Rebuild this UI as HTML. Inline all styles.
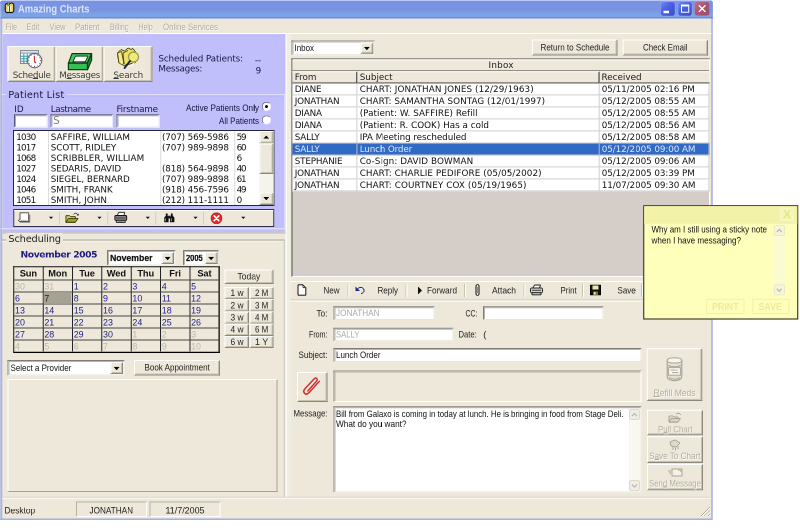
<!DOCTYPE html>
<html><head><meta charset="utf-8"><title>Amazing Charts</title>
<style>
*{box-sizing:border-box;margin:0;padding:0}
html,body{width:800px;height:528px;overflow:hidden;background:#fff}
body{position:relative;font-family:"Liberation Sans",sans-serif;color:#000}

#w{position:absolute;left:0;top:0;width:3200px;height:2112px;transform:scale(0.25);transform-origin:0 0;font-size:36px}
.a{position:absolute;white-space:nowrap}
.v{font-family:"DejaVu Sans","Liberation Sans",sans-serif}
.btn{position:absolute;background:#eee8db;border:4px solid;border-color:#fff #8a887c #8a887c #fff;box-shadow:inset -4px -4px 0 #c5c2b0;text-align:center;white-space:nowrap}
.sunk{position:absolute;border:4px solid;border-color:#8a887c #fff #fff #8a887c;box-shadow:inset 4px 4px 0 #b5b2a0}
.inp{position:absolute;background:#fff;border:4px solid;border-color:#807e74 #e8e6da #e8e6da #807e74;box-shadow:inset 4px 4px 0 #b8b5a5;white-space:nowrap;overflow:hidden}
.inl{border-color:#5a5a74 #e8e8ff #e8e8ff #5a5a74;box-shadow:inset 4px 4px 0 #a8a8c8}
.grp{position:absolute;border:4px solid #aaa799;box-shadow:4px 4px 0 #fbfaf4, inset 0 4px 0 #fbfaf4}

#t{position:absolute;left:0;top:0;width:1600px;height:1056px;transform:scale(0.5);transform-origin:0 0;font-size:18px;will-change:transform}
.dis{text-shadow:1.6px 1.6px 0 #fbfaf5}
u{text-decoration:underline;text-decoration-skip-ink:none;text-underline-offset:-0.4px;text-decoration-thickness:1.6px}
#t .a{position:absolute;white-space:nowrap}
</style></head><body>
<div id="w">
<div class="a" style="left:0;top:0;width:2850.8px;height:2080px;background:#a4aee2;border-radius:16px 12px 0 0"></div>
<div class="a" style="left:0;top:0;width:2850.8px;height:74.8px;background:linear-gradient(#c4d1f9 0,#b4c4f6 3.2px,#7a92e2 5.6px,#7994e3 24px,#7893e0 40px,#7aa0e5 52px,#7ba6e6 65.6px,#6f8cd4 70px,#6b86cc 74.8px);border-radius:16px 12px 0 0"></div>
<div class="a" style="left:0;top:16px;width:4.8px;height:2060px;background:rgba(255,255,255,.28)"></div>
<svg class="a" style="left:15.2px;top:7.2px" width="46" height="48" viewBox="0 0 23 24"><path d="M3 7C3 3 9 2 11 5C13 1 20 2 20 6V18C20 21 15 23 11 21C7 23 3 21 3 18Z" fill="#e6d44c" stroke="#15150a" stroke-width="2.2"/><path d="M8 8H15V19H8Z" fill="#fbf8dc"/><path d="M11.5 8V20" stroke="#15150a" stroke-width="1.6"/><circle cx="9" cy="4.6" r="2.4" fill="#f2e674" stroke="#15150a" stroke-width="1.4"/></svg>
<div class="a" style="left:2642.8px;top:8px;width:56px;height:55.2px;border-radius:10px;background:linear-gradient(135deg,#7088f2,#4a60e2 45%,#3a4cc8);box-shadow:0 0 0 3.2px rgba(160,180,250,.55)"><div class="a" style="left:11.2px;top:34.8px;width:22px;height:10px;background:#fff"></div></div>
<div class="a" style="left:2712.8px;top:8px;width:54.4px;height:55.2px;border-radius:10px;background:linear-gradient(135deg,#7088f2,#4a60e2 45%,#3a4cc8);box-shadow:0 0 0 3.2px rgba(160,180,250,.55)"><div class="a" style="left:11.2px;top:10px;width:32.8px;height:32.8px;border:4px solid #fff;border-top-width:8px"></div></div>
<div class="a" style="left:2779.2px;top:8px;width:57.6px;height:54.4px;border-radius:10px;background:linear-gradient(135deg,#c07088,#a8546f 50%,#9c4a68);box-shadow:0 0 0 3.2px rgba(170,150,220,.4)"><svg class="a" style="left:13.6px;top:10.8px" width="31.2" height="31.2" viewBox="0 0 8 8"><path d="M0.5 0.5L7.5 7.5M7.5 0.5L0.5 7.5" stroke="#fff" stroke-width="1.35"/></svg></div>
<div class="a" style="left:8.8px;top:74.8px;width:2836px;height:1998.8px;background:#eee8db"></div>
<div class="a" style="left:8.8px;top:74.8px;width:2836px;height:5.2px;background:#e6e5f6"></div>
<div class="a" style="left:10px;top:132px;width:2836px;height:4px;background:#fff"></div>
<div class="a" style="left:10px;top:136px;width:1133.2px;height:794.4px;background:#c1befc"></div>
<div class="a" style="left:10px;top:930px;width:1134px;height:4px;background:#bdbab0"></div>
<div class="a" style="left:1142px;top:136px;width:6.4px;height:1852px;background:#fbfaf4"></div>
<div class="a" style="left:1148.4px;top:136px;width:16px;height:1852px;background:#f0eee2"></div>
<div class="btn" style="left:30px;top:184px;width:192px;height:144px"></div>
<svg class="a" style="left:76px;top:192px" width="104" height="88" viewBox="0 0 26 22">
<rect x="1.5" y="2.5" width="18" height="13" fill="#fff" stroke="#7a8a98" stroke-width="1"/>
<rect x="1.5" y="2.5" width="18" height="2.6" fill="#dde3ea" stroke="#7a8a98" stroke-width=".8"/>
<path d="M4.8 5.5V15M8.2 5.5V15M11.6 5.5V15M2 8.2H14M2 10.8H14M2 13.2H14" stroke="#3aa0a8" stroke-width="1.1"/>
<circle cx="15.6" cy="12.6" r="7.2" fill="#fff" stroke="#6a7088" stroke-width="1.2"/>
<g fill="#444"><circle cx="15.6" cy="6.8" r=".55"/><circle cx="15.6" cy="18.4" r=".55"/><circle cx="9.8" cy="12.6" r=".55"/><circle cx="21.4" cy="12.6" r=".55"/><circle cx="12.7" cy="7.6" r=".45"/><circle cx="18.5" cy="7.6" r=".45"/><circle cx="10.6" cy="9.7" r=".45"/><circle cx="20.6" cy="9.7" r=".45"/><circle cx="10.6" cy="15.5" r=".45"/><circle cx="20.6" cy="15.5" r=".45"/><circle cx="12.7" cy="17.6" r=".45"/><circle cx="18.5" cy="17.6" r=".45"/></g>
<path d="M15.4 8V13.4L17 15" stroke="#d42828" stroke-width="1.1" fill="none"/>
</svg>
<div class="btn" style="left:222px;top:184px;width:192px;height:144px"></div>
<svg class="a" style="left:268px;top:210px" width="108" height="76" viewBox="0 0 27 19">
<path d="M5 1.2H24.6L20.5 10.6H1.4Z" fill="#3cc85a" stroke="#0c3c14" stroke-width="1.2" stroke-linejoin="round"/>
<path d="M1.4 10.6H20.5V17.2H1.4Z" fill="#34c052" stroke="#0c3c14" stroke-width="1.2" stroke-linejoin="round"/>
<path d="M20.5 10.6L24.6 1.2V7.5L20.5 17.2Z" fill="#22953a" stroke="#0c3c14" stroke-width="1.2" stroke-linejoin="round"/>
<path d="M8.5 3.6H21L18.2 9.6H5.8Z" fill="#fff" stroke="#0c3c14" stroke-width="1"/>
<path d="M6.5 9.4C8 11.8 15 11.8 17.8 9.4Z" fill="#666" stroke="#0c3c14" stroke-width=".8"/>
</svg>
<div class="btn" style="left:414px;top:184px;width:196px;height:144px"></div>
<svg class="a" style="left:464px;top:184px" width="104" height="100" viewBox="0 0 26 25">
<path d="M1.5 7L5 3.5L8.5 5L12 2L15 3.5L17 2.5L19.5 6V16.5L8 19.5L3 17Z" fill="#ece068" stroke="#4a4410" stroke-width="1"/>
<path d="M3 17L1.5 7L5.5 5.5L8 18" fill="#f4ec90" stroke="#4a4410" stroke-width=".9"/>
<path d="M8 18L7 7L12 4.5" fill="none" stroke="#4a4410" stroke-width=".9"/>
<path d="M13.5 15L9 21.5" stroke="#fff" stroke-width="1.2" stroke-linecap="round" transform="translate(6.5,-1.5)"/>
<circle cx="17.5" cy="11" r="5" fill="#ecec78" stroke="#9a9a50" stroke-width="1.3"/>
<path d="M14 15L8.6 22" stroke="#15204a" stroke-width="2" stroke-linecap="round"/>
</svg>
<div class="a" style="left:4.8px;top:377.2px;width:1137.2px;height:540px;border:4px solid #e9e9ff;border-left:none;box-shadow:inset 0 4px 0 #b0b0e0"></div>
<div class="inp inl" style="left:56px;top:456.8px;width:133.6px;height:53.2px"></div>
<div class="inp inl" style="left:202px;top:456.8px;width:250px;height:53.2px"></div>
<div class="inp inl" style="left:466px;top:456.8px;width:172px;height:53.2px"></div>
<div class="a" style="left:1046.8px;top:406.8px;width:38px;height:38px;border-radius:50%;background:#fff;border:4px solid;border-color:#77768a #e8e8f8 #e8e8f8 #77768a"></div>
<div class="a" style="left:1059.6px;top:419.6px;width:12.8px;height:12.8px;border-radius:50%;background:#000"></div>
<div class="a" style="left:1046.8px;top:460.8px;width:38px;height:38px;border-radius:50%;background:#fff;border:4px solid;border-color:#77768a #e8e8f8 #e8e8f8 #77768a"></div>
<div class="a" style="left:52px;top:520px;width:1046px;height:304px;background:#fff;border:4px solid #26263c"></div>
<div class="a" style="left:192px;top:524px;width:4px;height:296px;background:#dcdcdc"></div>
<div class="a" style="left:640.8px;top:524px;width:4px;height:296px;background:#dcdcdc"></div>
<div class="a" style="left:936.8px;top:524px;width:4px;height:296px;background:#dcdcdc"></div>
<div class="a" style="left:1038px;top:524px;width:56px;height:296px;background:#f4f3ec"></div>
<div class="btn" style="left:1038px;top:524px;width:56px;height:50px"></div>
<svg class="a" style="left:1053.2px;top:541.8px" width="24" height="12.8" viewBox="0 0 6 3.2"><path d="M0 3.2H6L3 0Z" fill="#000"/></svg>
<div class="btn" style="left:1038px;top:770px;width:56px;height:50px"></div>
<svg class="a" style="left:1053.2px;top:787.8px" width="24" height="12.8" viewBox="0 0 6 3.2"><path d="M0 0H6L3 3.2Z" fill="#000"/></svg>
<div class="btn" style="left:1038px;top:574px;width:56px;height:122px"></div>
<div class="a" style="left:52.8px;top:836px;width:1044px;height:72px;background:#eee8db;border:4px solid #30304c"></div>
<div class="a" style="left:56.8px;top:840px;width:1036px;height:4px;background:#fff"></div>
<div class="a" style="left:236px;top:846px;width:4px;height:52px;background:#d2cfbf"></div>
<div class="a" style="left:429.2px;top:846px;width:4px;height:52px;background:#d2cfbf"></div>
<div class="a" style="left:621.2px;top:846px;width:4px;height:52px;background:#d2cfbf"></div>
<div class="a" style="left:812px;top:846px;width:4px;height:52px;background:#d2cfbf"></div>
<svg class="a" style="left:195.2px;top:865.6px" width="18.4" height="11.2" viewBox="0 0 4.6 2.8"><path d="M0 0H4.6L2.3 2.6Z" fill="#111"/></svg>
<svg class="a" style="left:388.8px;top:865.6px" width="18.4" height="11.2" viewBox="0 0 4.6 2.8"><path d="M0 0H4.6L2.3 2.6Z" fill="#111"/></svg>
<svg class="a" style="left:581.6px;top:865.6px" width="18.4" height="11.2" viewBox="0 0 4.6 2.8"><path d="M0 0H4.6L2.3 2.6Z" fill="#111"/></svg>
<svg class="a" style="left:772.8px;top:865.6px" width="18.4" height="11.2" viewBox="0 0 4.6 2.8"><path d="M0 0H4.6L2.3 2.6Z" fill="#111"/></svg>
<svg class="a" style="left:964px;top:865.6px" width="18.4" height="11.2" viewBox="0 0 4.6 2.8"><path d="M0 0H4.6L2.3 2.6Z" fill="#111"/></svg>
<svg class="a" style="left:68px;top:846px" width="56" height="48" viewBox="0 0 14 12"><path d="M2.8 10.6H12.6V3.2" fill="none" stroke="#8a8a8a" stroke-width="1.3"/><path d="M3 1.3H11.6V8.6L12 10H2.2L1.4 8.6L3 8.2Z" fill="#fff" stroke="#444" stroke-width=".9"/><path d="M3.6 8.4L4.4 9.4L5.4 8.4L6.4 9.4L7.4 8.4L8.4 9.4L9.4 8.4L10.4 9.4" fill="none" stroke="#777" stroke-width=".6"/></svg>
<svg class="a" style="left:260px;top:846px" width="60" height="52" viewBox="0 0 16 13"><path d="M1 4H5L6 5H11V11H1Z" fill="#d8d060" stroke="#3c3c0c" stroke-width="1"/><path d="M1 11L3.5 7H14L11 11Z" fill="#a0a030" stroke="#3c3c0c" stroke-width="1"/><path d="M9 2.5C10.5 1 12.5 1 13.5 3" stroke="#222" fill="none" stroke-width=".9"/><path d="M12.3 3.8H14.6V1.6Z" fill="#222"/></svg>
<svg class="a" style="left:454px;top:844px" width="60" height="52" viewBox="0 0 16 13"><path d="M4 4.5L5.5 1H12L11 4.5" fill="#fff" stroke="#222" stroke-width="1"/><rect x="1.5" y="4.5" width="12.5" height="5" rx="1" fill="#a8a8a8" stroke="#111" stroke-width="1.1"/><path d="M3 9.5H12.5V11.7H3Z" fill="#e4e4e4" stroke="#111" stroke-width="1"/><path d="M2.5 7H13" stroke="#222" stroke-width="1.2"/><path d="M4.5 10.6H11" stroke="#666" stroke-width=".7"/></svg>
<svg class="a" style="left:652.8px;top:848px" width="50" height="48" viewBox="0 0 13 13"><path d="M2.5 1.5H4.5V4L5.5 6V11H0.8V6L2.5 4Z" fill="#111"/><path d="M8 1.5H10V4L11.8 6V11H7V6L8 4Z" fill="#111"/><rect x="5" y="4" width="2.5" height="3" fill="#111"/><path d="M2 7V10M8.5 7V10" stroke="#8ad" stroke-width="1"/></svg>
<svg class="a" style="left:842.4px;top:848.8px" width="48" height="48" viewBox="0 0 13 13"><circle cx="6.5" cy="6.5" r="6" fill="#e02828"/><circle cx="6.5" cy="6.5" r="6" fill="none" stroke="#a01010" stroke-width=".8"/><path d="M4 4L9 9M9 4L4 9" stroke="#fff" stroke-width="1.8" stroke-linecap="round"/></svg>
<div class="grp" style="left:4.8px;top:958px;width:1134px;height:1032px;border-left:none;border-bottom:none;border-right-color:#c9c6b6;box-shadow:inset 0 4px 0 #fbfaf4"></div>
<div class="inp" style="left:428px;top:1000px;width:274px;height:62px"></div>
<div class="btn" style="left:646px;top:1008px;width:50px;height:48px"></div>
<svg class="a" style="left:658px;top:1027px" width="26" height="16" viewBox="0 0 6.5 4"><path d="M0 0H6.2L3.1 3.4Z" fill="#000"/></svg>
<div class="inp" style="left:732px;top:1000px;width:144px;height:62px"></div>
<div class="btn" style="left:820px;top:1008px;width:50px;height:48px"></div>
<svg class="a" style="left:832px;top:1027px" width="26" height="16" viewBox="0 0 6.5 4"><path d="M0 0H6.2L3.1 3.4Z" fill="#000"/></svg>
<div class="a" style="left:53.2px;top:1065.2px;width:825.8px;height:346.8px;background:#eee8db;border:4px solid #111;border-bottom:5.6px solid #000;border-right:5.2px solid #000"></div>
<div class="a" style="left:170.6px;top:1065.2px;width:4px;height:340.8px;background:#222"></div>
<div class="a" style="left:288px;top:1065.2px;width:4px;height:340.8px;background:#222"></div>
<div class="a" style="left:405.4px;top:1065.2px;width:4px;height:340.8px;background:#222"></div>
<div class="a" style="left:522.8px;top:1065.2px;width:4px;height:340.8px;background:#222"></div>
<div class="a" style="left:640.2px;top:1065.2px;width:4px;height:340.8px;background:#222"></div>
<div class="a" style="left:757.6px;top:1065.2px;width:4px;height:340.8px;background:#222"></div>
<div class="a" style="left:53.2px;top:1118px;width:821.8px;height:4px;background:#444"></div>
<div class="a" style="left:53.2px;top:1166px;width:821.8px;height:4px;background:#444"></div>
<div class="a" style="left:53.2px;top:1214px;width:821.8px;height:4px;background:#444"></div>
<div class="a" style="left:53.2px;top:1262px;width:821.8px;height:4px;background:#444"></div>
<div class="a" style="left:53.2px;top:1310px;width:821.8px;height:4px;background:#444"></div>
<div class="a" style="left:53.2px;top:1358px;width:821.8px;height:4px;background:#444"></div>
<div class="a" style="left:174.6px;top:1170px;width:111.4px;height:44px;background:#a5a193"></div>
<div class="btn" style="left:898px;top:1078px;width:196px;height:58px"></div>
<div class="btn" style="left:898px;top:1148.4px;width:98px;height:48.8px"></div>
<div class="btn" style="left:998px;top:1148.4px;width:96px;height:48.8px"></div>
<div class="btn" style="left:898px;top:1197.2px;width:98px;height:48.8px"></div>
<div class="btn" style="left:998px;top:1197.2px;width:96px;height:48.8px"></div>
<div class="btn" style="left:898px;top:1246px;width:98px;height:48.8px"></div>
<div class="btn" style="left:998px;top:1246px;width:96px;height:48.8px"></div>
<div class="btn" style="left:898px;top:1294.8px;width:98px;height:48.8px"></div>
<div class="btn" style="left:998px;top:1294.8px;width:96px;height:48.8px"></div>
<div class="btn" style="left:898px;top:1343.6px;width:98px;height:48.8px"></div>
<div class="btn" style="left:998px;top:1343.6px;width:96px;height:48.8px"></div>
<div class="inp" style="left:30px;top:1440px;width:468px;height:62px"></div>
<div class="btn" style="left:442px;top:1448px;width:50px;height:48px"></div>
<svg class="a" style="left:454px;top:1467px" width="26" height="16" viewBox="0 0 6.5 4"><path d="M0 0H6.2L3.1 3.4Z" fill="#000"/></svg>
<div class="btn" style="left:536px;top:1440px;width:344px;height:62px"></div>
<div class="a" style="left:30px;top:1516px;width:1080px;height:452px;border:4px solid;border-color:#fff #a5a294 #a5a294 #fff"></div>
<div class="a" style="left:8.8px;top:1987.2px;width:2836px;height:4px;background:#d4d1c2"></div>
<div class="a" style="left:8.8px;top:1991.2px;width:2836px;height:4px;background:#fbfaf6"></div>
<div class="a" style="left:304px;top:2006px;width:284px;height:62px;border:4px solid;border-color:#b5b2a0 #fff #fff #b5b2a0"></div>
<div class="a" style="left:598px;top:2006px;width:284px;height:62px;border:4px solid;border-color:#b5b2a0 #fff #fff #b5b2a0"></div>
<svg class="a" style="left:2800px;top:2024px" width="44" height="44" viewBox="0 0 11 11"><path d="M10 1L1 10M10 4.5L4.5 10M10 8L8 10" stroke="#aca899" stroke-width="1"/><path d="M10 2L2 10M10 5.5L5.5 10M10 9L9 10" stroke="#fff" stroke-width="1"/></svg>
<div class="inp" style="left:1166px;top:161.6px;width:332.8px;height:59.2px"></div>
<div class="btn" style="left:1442.8px;top:169.6px;width:50px;height:45.2px"></div>
<svg class="a" style="left:1454.8px;top:187.2px" width="26" height="16" viewBox="0 0 6.5 4"><path d="M0 0H6.2L3.1 3.4Z" fill="#000"/></svg>
<div class="btn" style="left:2128px;top:158px;width:342px;height:64px"></div>
<div class="btn" style="left:2490.8px;top:158.4px;width:340.8px;height:64px"></div>
<div class="a" style="left:1166px;top:234px;width:1674px;height:874px;background:#d5cec8;border:4px solid #55534a;border-right-color:#fff;border-bottom-color:#fff"></div>
<div class="a" style="left:1170px;top:238px;width:1666px;height:48px;background:#eee8db;border-bottom:4px solid #333;border-top:4px solid #fff"></div>
<div class="a" style="left:1170px;top:284.8px;width:260px;height:50px;background:#eee8db;border-right:5.2px solid #333;border-bottom:5.2px solid #333;border-top:4px solid #fff"></div>
<div class="a" style="left:1430px;top:284.8px;width:969.2px;height:50px;background:#eee8db;border-right:5.2px solid #333;border-bottom:5.2px solid #333;border-top:4px solid #fff"></div>
<div class="a" style="left:2399.2px;top:284.8px;width:438.8px;height:50px;background:#eee8db;border-right:0px solid #333;border-bottom:5.2px solid #333;border-top:4px solid #fff"></div>
<div class="a" style="left:1170px;top:334px;width:260px;height:48px;background:#fff;border-right:4px solid #c8c8c8;border-bottom:4px solid #c8c8c8"></div>
<div class="a" style="left:1430px;top:334px;width:969.2px;height:48px;background:#fff;border-right:4px solid #c8c8c8;border-bottom:4px solid #c8c8c8"></div>
<div class="a" style="left:2399.2px;top:334px;width:438.8px;height:48px;background:#fff;border-right:4px solid #c8c8c8;border-bottom:4px solid #c8c8c8"></div>
<div class="a" style="left:1170px;top:382px;width:260px;height:48px;background:#fff;border-right:4px solid #c8c8c8;border-bottom:4px solid #c8c8c8"></div>
<div class="a" style="left:1430px;top:382px;width:969.2px;height:48px;background:#fff;border-right:4px solid #c8c8c8;border-bottom:4px solid #c8c8c8"></div>
<div class="a" style="left:2399.2px;top:382px;width:438.8px;height:48px;background:#fff;border-right:4px solid #c8c8c8;border-bottom:4px solid #c8c8c8"></div>
<div class="a" style="left:1170px;top:430px;width:260px;height:48px;background:#fff;border-right:4px solid #c8c8c8;border-bottom:4px solid #c8c8c8"></div>
<div class="a" style="left:1430px;top:430px;width:969.2px;height:48px;background:#fff;border-right:4px solid #c8c8c8;border-bottom:4px solid #c8c8c8"></div>
<div class="a" style="left:2399.2px;top:430px;width:438.8px;height:48px;background:#fff;border-right:4px solid #c8c8c8;border-bottom:4px solid #c8c8c8"></div>
<div class="a" style="left:1170px;top:478px;width:260px;height:48px;background:#fff;border-right:4px solid #c8c8c8;border-bottom:4px solid #c8c8c8"></div>
<div class="a" style="left:1430px;top:478px;width:969.2px;height:48px;background:#fff;border-right:4px solid #c8c8c8;border-bottom:4px solid #c8c8c8"></div>
<div class="a" style="left:2399.2px;top:478px;width:438.8px;height:48px;background:#fff;border-right:4px solid #c8c8c8;border-bottom:4px solid #c8c8c8"></div>
<div class="a" style="left:1170px;top:526px;width:260px;height:48px;background:#fff;border-right:4px solid #c8c8c8;border-bottom:4px solid #c8c8c8"></div>
<div class="a" style="left:1430px;top:526px;width:969.2px;height:48px;background:#fff;border-right:4px solid #c8c8c8;border-bottom:4px solid #c8c8c8"></div>
<div class="a" style="left:2399.2px;top:526px;width:438.8px;height:48px;background:#fff;border-right:4px solid #c8c8c8;border-bottom:4px solid #c8c8c8"></div>
<div class="a" style="left:1170px;top:574px;width:260px;height:48px;background:#316ac5;border-right:4px solid #c8c8c8;border-bottom:4px solid #c8c8c8"></div>
<div class="a" style="left:1430px;top:574px;width:969.2px;height:48px;background:#316ac5;border-right:4px solid #c8c8c8;border-bottom:4px solid #c8c8c8"></div>
<div class="a" style="left:2399.2px;top:574px;width:438.8px;height:48px;background:#316ac5;border-right:4px solid #c8c8c8;border-bottom:4px solid #c8c8c8"></div>
<div class="a" style="left:1170px;top:622px;width:260px;height:48px;background:#fff;border-right:4px solid #c8c8c8;border-bottom:4px solid #c8c8c8"></div>
<div class="a" style="left:1430px;top:622px;width:969.2px;height:48px;background:#fff;border-right:4px solid #c8c8c8;border-bottom:4px solid #c8c8c8"></div>
<div class="a" style="left:2399.2px;top:622px;width:438.8px;height:48px;background:#fff;border-right:4px solid #c8c8c8;border-bottom:4px solid #c8c8c8"></div>
<div class="a" style="left:1170px;top:670px;width:260px;height:48px;background:#fff;border-right:4px solid #c8c8c8;border-bottom:4px solid #c8c8c8"></div>
<div class="a" style="left:1430px;top:670px;width:969.2px;height:48px;background:#fff;border-right:4px solid #c8c8c8;border-bottom:4px solid #c8c8c8"></div>
<div class="a" style="left:2399.2px;top:670px;width:438.8px;height:48px;background:#fff;border-right:4px solid #c8c8c8;border-bottom:4px solid #c8c8c8"></div>
<div class="a" style="left:1170px;top:718px;width:260px;height:48px;background:#fff;border-right:4px solid #c8c8c8;border-bottom:4px solid #c8c8c8"></div>
<div class="a" style="left:1430px;top:718px;width:969.2px;height:48px;background:#fff;border-right:4px solid #c8c8c8;border-bottom:4px solid #c8c8c8"></div>
<div class="a" style="left:2399.2px;top:718px;width:438.8px;height:48px;background:#fff;border-right:4px solid #c8c8c8;border-bottom:4px solid #c8c8c8"></div>
<div class="a" style="left:1160px;top:1124px;width:1684px;height:4px;background:#fff"></div>
<div class="a" style="left:1160px;top:1198px;width:1684px;height:4px;background:#c5c2b0"></div>
<div class="a" style="left:1160px;top:1202px;width:1684px;height:4px;background:#fff"></div>
<div class="a" style="left:1390px;top:1136px;width:4px;height:52px;background:#c6c3b3"></div><div class="a" style="left:1394px;top:1136px;width:4px;height:52px;background:#fff"></div>
<div class="a" style="left:1622px;top:1136px;width:4px;height:52px;background:#c6c3b3"></div><div class="a" style="left:1626px;top:1136px;width:4px;height:52px;background:#fff"></div>
<div class="a" style="left:1856px;top:1136px;width:4px;height:52px;background:#c6c3b3"></div><div class="a" style="left:1860px;top:1136px;width:4px;height:52px;background:#fff"></div>
<div class="a" style="left:2094px;top:1136px;width:4px;height:52px;background:#c6c3b3"></div><div class="a" style="left:2098px;top:1136px;width:4px;height:52px;background:#fff"></div>
<div class="a" style="left:2328px;top:1136px;width:4px;height:52px;background:#c6c3b3"></div><div class="a" style="left:2332px;top:1136px;width:4px;height:52px;background:#fff"></div>
<div class="a" style="left:2564px;top:1136px;width:4px;height:52px;background:#c6c3b3"></div><div class="a" style="left:2568px;top:1136px;width:4px;height:52px;background:#fff"></div>
<svg class="a" style="left:1188px;top:1136px" width="40" height="48" viewBox="0 0 10 12"><path d="M1 .8H6L8.8 3.6V11.2H1Z" fill="#fff" stroke="#111" stroke-width="1"/><path d="M6 .8V3.6H8.8" fill="none" stroke="#111" stroke-width=".8"/></svg>
<svg class="a" style="left:1420px;top:1140px" width="44" height="40" viewBox="0 0 11 10"><path d="M2 4.5C4 1.5 8.5 1.8 9 5C9.3 7 8 8.5 6 8.5" fill="none" stroke="#1a226a" stroke-width="1"/><path d="M.5 1.5V6H5Z" fill="#1a2a90"/></svg>
<svg class="a" style="left:1670px;top:1146px" width="20" height="32" viewBox="0 0 5 8"><path d="M.5 0L4.5 4L.5 8Z" fill="#111"/></svg>
<svg class="a" style="left:1900px;top:1134px" width="20" height="52" viewBox="0 0 5 13"><rect x="1" y="1" width="3" height="11" rx="1.5" fill="none" stroke="#111" stroke-width="1"/><path d="M2.5 3.5V9.5" stroke="#777" stroke-width=".8"/></svg>
<svg class="a" style="left:2116px;top:1136px" width="60" height="48" viewBox="0 0 15 12"><path d="M4 4L5.5 1H11.5L10.5 4" fill="#fff" stroke="#222" stroke-width="1"/><rect x="1.5" y="4" width="12" height="4.8" rx="1" fill="#d0d0d0" stroke="#222" stroke-width="1"/><path d="M3 8.8H12V10.8H3Z" fill="#eee" stroke="#222" stroke-width="1"/><path d="M3 6.3H12" stroke="#444" stroke-width="1"/></svg>
<svg class="a" style="left:2360px;top:1138px" width="44" height="44" viewBox="0 0 11 11"><rect x=".5" y=".5" width="10" height="10" fill="#141404" stroke="#000" stroke-width="1"/><rect x="2.5" y="1" width="6" height="4" fill="#e8e8b0"/><rect x="3" y="7" width="5" height="3.5" fill="#7a7a30"/><rect x="4" y="7.6" width="1.6" height="2.4" fill="#e8e8b0"/></svg>
<div class="inp" style="left:1334px;top:1224.8px;width:404px;height:55.2px"></div>
<div class="inp" style="left:1932px;top:1224.8px;width:482px;height:55.2px"></div>
<div class="inp" style="left:1334px;top:1311.2px;width:480px;height:53.6px"></div>
<div class="inp" style="left:1334px;top:1392px;width:1232px;height:56px"></div>
<div class="btn" style="left:1188px;top:1488px;width:122px;height:120px"></div>
<svg class="a" style="left:1204px;top:1496px" width="88" height="94" viewBox="0 0 21 22"><path d="M6.5 16L15 6.5C16.5 4.8 14.5 2.6 12.8 4.2L3.6 14.2C0.8 17.4 4.6 20.6 7.4 17.8L17.5 6.8" fill="none" stroke="#d03030" stroke-width="1.4" stroke-linecap="round"/></svg>
<div class="sunk" style="left:1334px;top:1482px;width:1232px;height:126px;background:#eee8db"></div>
<div class="inp" style="left:1334px;top:1624.8px;width:1232px;height:345.2px"></div>
<div class="a" style="left:2516px;top:1636px;width:44px;height:328px;background:#f8f7f0"></div>
<div class="a" style="left:2516px;top:1636px;width:44px;height:44px;background:#f0eee4;border:4px solid #dcd9cc;border-radius:8px"></div>
<svg class="a" style="left:2524px;top:1648px" width="28" height="22" viewBox="0 0 7 5.5"><path d="M1 4L3.5 1.5L6 4" fill="none" stroke="#c0bdb0" stroke-width="1.3"/></svg>
<div class="a" style="left:2516px;top:1920px;width:44px;height:44px;background:#f0eee4;border:4px solid #dcd9cc;border-radius:8px"></div>
<svg class="a" style="left:2524px;top:1932px" width="28" height="22" viewBox="0 0 7 5.5"><path d="M1 1.5L3.5 4L6 1.5" fill="none" stroke="#c0bdb0" stroke-width="1.3"/></svg>
<div class="btn" style="left:2586.8px;top:1392.8px;width:222px;height:211.2px"></div>
<div class="btn" style="left:2588px;top:1638.8px;width:224px;height:102px"></div>
<div class="btn" style="left:2588px;top:1745.2px;width:224px;height:106.8px"></div>
<div class="btn" style="left:2588px;top:1856px;width:224px;height:105.2px"></div>
<svg class="a" style="left:2664px;top:1428px" width="68" height="102" viewBox="0 0 17 25.5"><path d="M1.2 3.4V19.5C1.2 25 15.8 25 15.8 19.5V3.4" fill="#e4e0d2" stroke="#aaa79a" stroke-width="1.2"/><ellipse cx="8.5" cy="3.4" rx="7.3" ry="2.6" fill="#f6f4ea" stroke="#aaa79a" stroke-width="1.1"/><path d="M2.2 8.2C5 10.4 12 10.4 14.8 8.2" fill="none" stroke="#aaa79a" stroke-width="1.4"/><rect x="2.6" y="10.6" width="11.8" height="7.6" fill="#f8f6ee" stroke="#aaa79a" stroke-width="1"/><path d="M4.6 13H9.5M6 15.6H12.4M10.8 12.6V14" stroke="#aaa79a" stroke-width="1"/><path d="M3 20.6C6 22.6 11 22.6 14 20.6" fill="none" stroke="#b8b5a8" stroke-width="1.3"/></svg>
<svg class="a" style="left:2672px;top:1648px" width="56" height="44" viewBox="0 0 14 11"><path d="M1 4H5L6 5H10V10H1Z" fill="#e4e1d2" stroke="#a8a595" stroke-width="1"/><path d="M1 10L3 6.5H12.5L10 10Z" fill="#d8d5c6" stroke="#a8a595" stroke-width="1"/><path d="M8 2L11 1L13 3" stroke="#a8a595" fill="none"/></svg>
<svg class="a" style="left:2672px;top:1756px" width="56" height="48" viewBox="0 0 14 12"><path d="M2 3L7 1L12 4L8 8L3 7Z" fill="#dedbcc" stroke="#a8a595" stroke-width="1"/><path d="M5 8V11M7.5 8.5V11.5M10 7V10" stroke="#a8a595"/></svg>
<svg class="a" style="left:2672px;top:1872px" width="60" height="36" viewBox="0 0 15 9"><rect x="4" y="1" width="10" height="7" fill="#f4f2e8" stroke="#a8a595" stroke-width="1"/><path d="M0 3H3M1 5H3" stroke="#a8a595"/><path d="M10 2H13V4" stroke="#a8a595" fill="none"/></svg>
<div class="a" style="left:2573.2px;top:821.2px;width:620px;height:456.8px;background:#ffffbc;border:4px solid #1c1c10"></div>
<div class="a" style="left:2577.2px;top:825.2px;width:612px;height:69.6px;background:#f2f2a8"></div>
<div class="a" style="left:3120px;top:830px;width:55.2px;height:52.8px;background:#f6f6b6;border:4px solid #f8f8c4"></div>
<div class="a" style="left:3094.8px;top:900px;width:45.2px;height:282.4px;background:#fbfbd2"></div>
<div class="a" style="left:3094.8px;top:900px;width:45.2px;height:44px;background:#f5f5dc;border:4px solid #eaeac8;border-radius:8px"></div>
<svg class="a" style="left:3103.4px;top:912px" width="28" height="22" viewBox="0 0 7 5.5"><path d="M1 4L3.5 1.5L6 4" fill="none" stroke="#bcbcb4" stroke-width="1.3"/></svg>
<div class="a" style="left:3094.8px;top:1136.8px;width:45.2px;height:44px;background:#f5f5dc;border:4px solid #eaeac8;border-radius:8px"></div>
<svg class="a" style="left:3103.4px;top:1148.8px" width="28" height="22" viewBox="0 0 7 5.5"><path d="M1 1.5L3.5 4L6 1.5" fill="none" stroke="#bcbcb4" stroke-width="1.3"/></svg>
<div class="a" style="left:2824.8px;top:1195.2px;width:153.2px;height:60.8px;border:4px solid #f1f1a6;background:#ffffba"></div>
<div class="a" style="left:3008.8px;top:1195.2px;width:149.2px;height:60.8px;border:4px solid #f1f1a6;background:#ffffba"></div>
</div>
<div id="t">
<div class="a " style="left:36px;top:5.4px;font-size:22px;color:#dde6fa;font-weight:bold;transform:scaleX(0.854);transform-origin:0 0;">Amazing Charts</div>
<div class="a dis" style="left:11px;top:42.6px;font-size:18.6px;color:#aeab9c;transform:scaleX(0.767);transform-origin:0 0;">File</div>
<div class="a dis" style="left:53.4px;top:42.6px;font-size:18.6px;color:#aeab9c;transform:scaleX(0.798);transform-origin:0 0;">Edit</div>
<div class="a dis" style="left:99px;top:42.6px;font-size:18.6px;color:#aeab9c;transform:scaleX(0.801);transform-origin:0 0;">View</div>
<div class="a dis" style="left:150px;top:42.6px;font-size:18.6px;color:#aeab9c;transform:scaleX(0.846);transform-origin:0 0;">Patient</div>
<div class="a dis" style="left:220px;top:42.6px;font-size:18.6px;color:#aeab9c;transform:scaleX(0.754);transform-origin:0 0;">Billing</div>
<div class="a dis" style="left:277.4px;top:42.6px;font-size:18.6px;color:#aeab9c;transform:scaleX(0.748);transform-origin:0 0;">Help</div>
<div class="a dis" style="left:326px;top:42.6px;font-size:18.6px;color:#aeab9c;transform:scaleX(0.845);transform-origin:0 0;">Online Services</div>
<div class="a v" style="left:25.4px;top:140px;font-size:17.6px;color:#3c3c3c;letter-spacing:-0.64px;">Sche<u>d</u>ule</div>
<div class="a v" style="left:118.6px;top:140px;font-size:17.6px;color:#3c3c3c;letter-spacing:-0.62px;">M<u>e</u>ssages</div>
<div class="a v" style="left:226.8px;top:140px;font-size:17.6px;color:#3c3c3c;letter-spacing:-0.17px;"><u>S</u>earch</div>
<div class="a v" style="left:316.8px;top:107px;font-size:17.6px;color:#1a1a44;letter-spacing:-0.26px;">Scheduled Patients:</div>
<div class="a v" style="left:316.8px;top:127px;font-size:17.6px;color:#1a1a44;letter-spacing:-0.53px;">Messages:</div>
<div class="a v" style="left:509.8px;top:109.6px;font-size:17.6px;color:#1a1a44;letter-spacing:-0.52px;">--</div>
<div class="a v" style="left:511.2px;top:131.2px;font-size:17.6px;color:#1a1a44;">9</div>
<div class="a v" style="left:16.4px;top:178.4px;font-size:19.6px;color:#1a1a44;letter-spacing:0.3px;background:#c1befc;padding:0 4px;margin-left:-4px">Patient List</div>
<div class="a v" style="left:28.4px;top:208px;font-size:17.6px;color:#1a1a44;letter-spacing:0.25px;">ID</div>
<div class="a v" style="left:101.4px;top:208px;font-size:17.6px;color:#1a1a44;letter-spacing:-0.79px;">Lastname</div>
<div class="a v" style="left:233px;top:208px;font-size:17.6px;color:#1a1a44;letter-spacing:-0.49px;">Firstname</div>
<div class="a v" style="left:106.2px;top:228.6px;font-size:20.8px;color:#808074;">S</div>
<div class="a " style="left:372px;top:204.6px;font-size:18.6px;color:#16163c;transform:scaleX(0.877);transform-origin:0 0;">Active Patients Only</div>
<div class="a " style="left:438px;top:231px;font-size:18.6px;color:#16163c;transform:scaleX(0.860);transform-origin:0 0;">All Patients</div>
<div class="a v" style="left:32.4px;top:263.8px;font-size:17.6px;color:#111;letter-spacing:-1.59px;">1030</div>
<div class="a v" style="left:101.4px;top:263.8px;font-size:17.6px;color:#111;letter-spacing:0.03px;">SAFFIRE, WILLIAM</div>
<div class="a v" style="left:324px;top:263.8px;font-size:17.6px;color:#111;letter-spacing:-0.28px;">(707) 569-5986</div>
<div class="a v" style="left:473.2px;top:263.8px;font-size:17.6px;color:#111;letter-spacing:-2.41px;">59</div>
<div class="a v" style="left:32.4px;top:284.9px;font-size:17.6px;color:#111;letter-spacing:-1.59px;">1017</div>
<div class="a v" style="left:101.4px;top:284.9px;font-size:17.6px;color:#111;letter-spacing:-0.1px;">SCOTT, RIDLEY</div>
<div class="a v" style="left:324px;top:284.9px;font-size:17.6px;color:#111;letter-spacing:-0.28px;">(707) 989-9898</div>
<div class="a v" style="left:473.2px;top:284.9px;font-size:17.6px;color:#111;letter-spacing:-2.41px;">60</div>
<div class="a v" style="left:32.4px;top:306px;font-size:17.6px;color:#111;letter-spacing:-1.59px;">1068</div>
<div class="a v" style="left:101.4px;top:306px;font-size:17.6px;color:#111;letter-spacing:0.18px;">SCRIBBLER, WILLIAM</div>
<div class="a v" style="left:473.2px;top:306px;font-size:17.6px;color:#111;">6</div>
<div class="a v" style="left:32.4px;top:327.1px;font-size:17.6px;color:#111;letter-spacing:-1.59px;">1027</div>
<div class="a v" style="left:101.4px;top:327.1px;font-size:17.6px;color:#111;letter-spacing:-0.1px;">SEDARIS, DAVID</div>
<div class="a v" style="left:324px;top:327.1px;font-size:17.6px;color:#111;letter-spacing:-0.28px;">(818) 564-9898</div>
<div class="a v" style="left:473.2px;top:327.1px;font-size:17.6px;color:#111;letter-spacing:-2.41px;">40</div>
<div class="a v" style="left:32.4px;top:348.2px;font-size:17.6px;color:#111;letter-spacing:-1.59px;">1024</div>
<div class="a v" style="left:101.4px;top:348.2px;font-size:17.6px;color:#111;letter-spacing:-0.1px;">SIEGEL, BERNARD</div>
<div class="a v" style="left:324px;top:348.2px;font-size:17.6px;color:#111;letter-spacing:-0.28px;">(707) 989-9898</div>
<div class="a v" style="left:473.2px;top:348.2px;font-size:17.6px;color:#111;letter-spacing:-2.41px;">61</div>
<div class="a v" style="left:32.4px;top:369.3px;font-size:17.6px;color:#111;letter-spacing:-1.59px;">1046</div>
<div class="a v" style="left:101.4px;top:369.3px;font-size:17.6px;color:#111;letter-spacing:-0.1px;">SMITH, FRANK</div>
<div class="a v" style="left:324px;top:369.3px;font-size:17.6px;color:#111;letter-spacing:-0.28px;">(918) 456-7596</div>
<div class="a v" style="left:473.2px;top:369.3px;font-size:17.6px;color:#111;letter-spacing:-2.41px;">49</div>
<div class="a v" style="left:32.4px;top:390.4px;font-size:17.6px;color:#111;letter-spacing:-1.59px;">1051</div>
<div class="a v" style="left:101.4px;top:390.4px;font-size:17.6px;color:#111;letter-spacing:0.04px;">SMITH, JOHN</div>
<div class="a v" style="left:324px;top:390.4px;font-size:17.6px;color:#111;letter-spacing:-0.28px;">(212) 111-1111</div>
<div class="a v" style="left:473.2px;top:390.4px;font-size:17.6px;color:#111;">0</div>
<div class="a v" style="left:16.8px;top:466.4px;font-size:19.6px;color:#222;letter-spacing:-0.35px;background:#eee8db;padding:0 4px;margin-left:-4px">Scheduling</div>
<div class="a v" style="left:41px;top:498px;font-size:18.4px;color:#1c1c84;font-weight:bold;letter-spacing:-0.82px;">November 2005</div>
<div class="a " style="left:220px;top:505px;font-size:18.4px;color:#111;font-weight:bold;transform:scaleX(0.946);transform-origin:0 0;-webkit-text-stroke:0.5px #111;">November</div>
<div class="a " style="left:372px;top:505px;font-size:18.4px;color:#111;font-weight:bold;transform:scaleX(0.817);transform-origin:0 0;-webkit-text-stroke:0.5px #111;">2005</div>
<div class="a " style="left:39.38px;top:536.2px;font-size:18.6px;color:#111;font-weight:bold;letter-spacing:-0.2px;">Sun</div>
<div class="a " style="left:96.54px;top:536.2px;font-size:18.6px;color:#111;font-weight:bold;letter-spacing:-0.2px;">Mon</div>
<div class="a " style="left:158.5px;top:536.2px;font-size:18.6px;color:#111;font-weight:bold;letter-spacing:-0.2px;">Tue</div>
<div class="a " style="left:213.58px;top:536.2px;font-size:18.6px;color:#111;font-weight:bold;letter-spacing:-0.2px;">Wed</div>
<div class="a " style="left:274.7px;top:536.2px;font-size:18.6px;color:#111;font-weight:bold;letter-spacing:-0.2px;">Thu</div>
<div class="a " style="left:338.56px;top:536.2px;font-size:18.6px;color:#111;font-weight:bold;letter-spacing:-0.2px;">Fri</div>
<div class="a " style="left:394.68px;top:536.2px;font-size:18.6px;color:#111;font-weight:bold;letter-spacing:-0.2px;">Sat</div>
<div class="a " style="left:30px;top:563px;font-size:17.8px;color:#bab7aa;">30</div>
<div class="a " style="left:88.7px;top:563px;font-size:17.8px;color:#bab7aa;">31</div>
<div class="a " style="left:147.4px;top:563px;font-size:17.8px;color:#1c1c8c;">1</div>
<div class="a " style="left:206.1px;top:563px;font-size:17.8px;color:#1c1c8c;">2</div>
<div class="a " style="left:264.8px;top:563px;font-size:17.8px;color:#1c1c8c;">3</div>
<div class="a " style="left:323.5px;top:563px;font-size:17.8px;color:#1c1c8c;">4</div>
<div class="a " style="left:382.2px;top:563px;font-size:17.8px;color:#1c1c8c;">5</div>
<div class="a " style="left:30px;top:587px;font-size:17.8px;color:#1c1c8c;">6</div>
<div class="a " style="left:88.7px;top:587px;font-size:17.8px;color:#222;">7</div>
<div class="a " style="left:147.4px;top:587px;font-size:17.8px;color:#1c1c8c;">8</div>
<div class="a " style="left:206.1px;top:587px;font-size:17.8px;color:#1c1c8c;">9</div>
<div class="a " style="left:264.8px;top:587px;font-size:17.8px;color:#1c1c8c;">10</div>
<div class="a " style="left:323.5px;top:587px;font-size:17.8px;color:#1c1c8c;">11</div>
<div class="a " style="left:382.2px;top:587px;font-size:17.8px;color:#1c1c8c;">12</div>
<div class="a " style="left:30px;top:611px;font-size:17.8px;color:#1c1c8c;">13</div>
<div class="a " style="left:88.7px;top:611px;font-size:17.8px;color:#1c1c8c;">14</div>
<div class="a " style="left:147.4px;top:611px;font-size:17.8px;color:#1c1c8c;">15</div>
<div class="a " style="left:206.1px;top:611px;font-size:17.8px;color:#1c1c8c;">16</div>
<div class="a " style="left:264.8px;top:611px;font-size:17.8px;color:#1c1c8c;">17</div>
<div class="a " style="left:323.5px;top:611px;font-size:17.8px;color:#1c1c8c;">18</div>
<div class="a " style="left:382.2px;top:611px;font-size:17.8px;color:#1c1c8c;">19</div>
<div class="a " style="left:30px;top:635px;font-size:17.8px;color:#1c1c8c;">20</div>
<div class="a " style="left:88.7px;top:635px;font-size:17.8px;color:#1c1c8c;">21</div>
<div class="a " style="left:147.4px;top:635px;font-size:17.8px;color:#1c1c8c;">22</div>
<div class="a " style="left:206.1px;top:635px;font-size:17.8px;color:#1c1c8c;">23</div>
<div class="a " style="left:264.8px;top:635px;font-size:17.8px;color:#1c1c8c;">24</div>
<div class="a " style="left:323.5px;top:635px;font-size:17.8px;color:#1c1c8c;">25</div>
<div class="a " style="left:382.2px;top:635px;font-size:17.8px;color:#1c1c8c;">26</div>
<div class="a " style="left:30px;top:659px;font-size:17.8px;color:#1c1c8c;">27</div>
<div class="a " style="left:88.7px;top:659px;font-size:17.8px;color:#1c1c8c;">28</div>
<div class="a " style="left:147.4px;top:659px;font-size:17.8px;color:#1c1c8c;">29</div>
<div class="a " style="left:206.1px;top:659px;font-size:17.8px;color:#1c1c8c;">30</div>
<div class="a " style="left:264.8px;top:659px;font-size:17.8px;color:#bab7aa;">1</div>
<div class="a " style="left:323.5px;top:659px;font-size:17.8px;color:#bab7aa;">2</div>
<div class="a " style="left:382.2px;top:659px;font-size:17.8px;color:#bab7aa;">3</div>
<div class="a " style="left:30px;top:683px;font-size:17.8px;color:#bab7aa;">4</div>
<div class="a " style="left:88.7px;top:683px;font-size:17.8px;color:#bab7aa;">5</div>
<div class="a " style="left:147.4px;top:683px;font-size:17.8px;color:#bab7aa;">6</div>
<div class="a " style="left:206.1px;top:683px;font-size:17.8px;color:#bab7aa;">7</div>
<div class="a " style="left:264.8px;top:683px;font-size:17.8px;color:#bab7aa;">8</div>
<div class="a " style="left:323.5px;top:683px;font-size:17.8px;color:#bab7aa;">9</div>
<div class="a " style="left:382.2px;top:683px;font-size:17.8px;color:#bab7aa;">10</div>
<div class="a " style="left:475.3px;top:542.2px;font-size:18.6px;color:#222;transform:scaleX(0.915);transform-origin:0 0;">Today</div>
<div class="a " style="left:460.5px;top:575.1px;font-size:18.6px;color:#222;transform:scaleX(0.898);transform-origin:0 0;">1 w</div>
<div class="a " style="left:509.7px;top:575.1px;font-size:18.6px;color:#222;transform:scaleX(0.858);transform-origin:0 0;">2 M</div>
<div class="a " style="left:460.5px;top:599.5px;font-size:18.6px;color:#222;transform:scaleX(0.898);transform-origin:0 0;">2 w</div>
<div class="a " style="left:509.7px;top:599.5px;font-size:18.6px;color:#222;transform:scaleX(0.858);transform-origin:0 0;">3 M</div>
<div class="a " style="left:460.5px;top:623.9px;font-size:18.6px;color:#222;transform:scaleX(0.898);transform-origin:0 0;">3 w</div>
<div class="a " style="left:509.7px;top:623.9px;font-size:18.6px;color:#222;transform:scaleX(0.858);transform-origin:0 0;">4 M</div>
<div class="a " style="left:460.5px;top:648.3px;font-size:18.6px;color:#222;transform:scaleX(0.898);transform-origin:0 0;">4 w</div>
<div class="a " style="left:509.7px;top:648.3px;font-size:18.6px;color:#222;transform:scaleX(0.858);transform-origin:0 0;">6 M</div>
<div class="a " style="left:460.5px;top:672.7px;font-size:18.6px;color:#222;transform:scaleX(0.898);transform-origin:0 0;">6 w</div>
<div class="a " style="left:509.7px;top:672.7px;font-size:18.6px;color:#222;transform:scaleX(0.964);transform-origin:0 0;">1 Y</div>
<div class="a " style="left:21px;top:724.6px;font-size:18.6px;color:#111;transform:scaleX(0.859);transform-origin:0 0;">Select a Provider</div>
<div class="a " style="left:288.7px;top:724.2px;font-size:18.6px;color:#222;transform:scaleX(0.865);transform-origin:0 0;">Book Appointment</div>
<div class="a " style="left:8.6px;top:1010px;font-size:18.6px;color:#222;transform:scaleX(0.900);transform-origin:0 0;">Desktop</div>
<div class="a " style="left:179px;top:1010px;font-size:18.6px;color:#222;transform:scaleX(0.880);transform-origin:0 0;">JONATHAN</div>
<div class="a " style="left:331.2px;top:1010px;font-size:18.6px;color:#222;transform:scaleX(0.959);transform-origin:0 0;">11/7/2005</div>
<div class="a " style="left:589px;top:84.8px;font-size:18.6px;color:#111;transform:scaleX(0.857);transform-origin:0 0;">Inbox</div>
<div class="a " style="left:1080.5px;top:83.7px;font-size:18.6px;color:#222;transform:scaleX(0.867);transform-origin:0 0;">Return to Schedule</div>
<div class="a " style="left:1286.1px;top:83.9px;font-size:18.6px;color:#222;transform:scaleX(0.853);transform-origin:0 0;">Check Email</div>
<div class="a v" style="left:977px;top:120.2px;font-size:17.6px;color:#222;letter-spacing:0.46px;">Inbox</div>
<div class="a v" style="left:589.4px;top:144.4px;font-size:17.6px;color:#222;">From</div>
<div class="a v" style="left:719.4px;top:144.4px;font-size:17.6px;color:#222;">Subject</div>
<div class="a v" style="left:1203px;top:144.4px;font-size:17.6px;color:#222;">Received</div>
<div class="a v" style="left:589.4px;top:168.2px;font-size:17.6px;color:#111;letter-spacing:-0.34px;">DIANE</div>
<div class="a v" style="left:719.4px;top:168.2px;font-size:17.6px;color:#111;letter-spacing:0.19px;">CHART: JONATHAN JONES (12/29/1963)</div>
<div class="a v" style="left:1203.4px;top:168.2px;font-size:17.6px;color:#111;letter-spacing:-0.16px;">05/11/2005 02:16 PM</div>
<div class="a v" style="left:589.4px;top:192.2px;font-size:17.6px;color:#111;letter-spacing:-0.34px;">JONATHAN</div>
<div class="a v" style="left:719.4px;top:192.2px;font-size:17.6px;color:#111;letter-spacing:0.08px;">CHART: SAMANTHA SONTAG (12/01/1997)</div>
<div class="a v" style="left:1203.4px;top:192.2px;font-size:17.6px;color:#111;letter-spacing:-0.16px;">05/12/2005 08:55 AM</div>
<div class="a v" style="left:589.4px;top:216.2px;font-size:17.6px;color:#111;letter-spacing:-0.34px;">DIANA</div>
<div class="a v" style="left:719.4px;top:216.2px;font-size:17.6px;color:#111;letter-spacing:0.06px;">(Patient: W. SAFFIRE) Refill</div>
<div class="a v" style="left:1203.4px;top:216.2px;font-size:17.6px;color:#111;letter-spacing:-0.16px;">05/12/2005 08:55 AM</div>
<div class="a v" style="left:589.4px;top:240.2px;font-size:17.6px;color:#111;letter-spacing:-0.34px;">DIANA</div>
<div class="a v" style="left:719.4px;top:240.2px;font-size:17.6px;color:#111;letter-spacing:0.02px;">(Patient: R. COOK) Has a cold</div>
<div class="a v" style="left:1203.4px;top:240.2px;font-size:17.6px;color:#111;letter-spacing:-0.16px;">05/12/2005 08:56 AM</div>
<div class="a v" style="left:589.4px;top:264.2px;font-size:17.6px;color:#111;letter-spacing:-0.34px;">SALLY</div>
<div class="a v" style="left:719.4px;top:264.2px;font-size:17.6px;color:#111;letter-spacing:-0.13px;">IPA Meeting rescheduled</div>
<div class="a v" style="left:1203.4px;top:264.2px;font-size:17.6px;color:#111;letter-spacing:-0.16px;">05/12/2005 08:58 AM</div>
<div class="a v" style="left:589.4px;top:288.2px;font-size:17.6px;color:#dfe8ff;letter-spacing:-0.34px;">SALLY</div>
<div class="a v" style="left:719.4px;top:288.2px;font-size:17.6px;color:#dfe8ff;letter-spacing:-0.32px;">Lunch Order</div>
<div class="a v" style="left:1203.4px;top:288.2px;font-size:17.6px;color:#dfe8ff;letter-spacing:-0.16px;">05/12/2005 09:00 AM</div>
<div class="a v" style="left:589.4px;top:312.2px;font-size:17.6px;color:#111;letter-spacing:-0.34px;">STEPHANIE</div>
<div class="a v" style="left:719.4px;top:312.2px;font-size:17.6px;color:#111;letter-spacing:0.17px;">Co-Sign: DAVID BOWMAN</div>
<div class="a v" style="left:1203.4px;top:312.2px;font-size:17.6px;color:#111;letter-spacing:-0.16px;">05/12/2005 09:06 AM</div>
<div class="a v" style="left:589.4px;top:336.2px;font-size:17.6px;color:#111;letter-spacing:-0.34px;">JONATHAN</div>
<div class="a v" style="left:719.4px;top:336.2px;font-size:17.6px;color:#111;letter-spacing:0.14px;">CHART: CHARLIE PEDIFORE (05/05/2002)</div>
<div class="a v" style="left:1203.4px;top:336.2px;font-size:17.6px;color:#111;letter-spacing:-0.16px;">05/12/2005 03:39 PM</div>
<div class="a v" style="left:589.4px;top:360.2px;font-size:17.6px;color:#111;letter-spacing:-0.34px;">JONATHAN</div>
<div class="a v" style="left:719.4px;top:360.2px;font-size:17.6px;color:#111;letter-spacing:0.18px;">CHART: COURTNEY COX (05/19/1965)</div>
<div class="a v" style="left:1203.4px;top:360.2px;font-size:17.6px;color:#111;letter-spacing:-0.16px;">11/07/2005 09:30 AM</div>
<div class="a " style="left:647px;top:570.4px;font-size:18.6px;color:#222;transform:scaleX(0.860);transform-origin:0 0;">New</div>
<div class="a " style="left:755px;top:570.4px;font-size:18.6px;color:#222;transform:scaleX(0.862);transform-origin:0 0;">Reply</div>
<div class="a " style="left:854px;top:570.4px;font-size:18.6px;color:#222;transform:scaleX(0.880);transform-origin:0 0;">Forward</div>
<div class="a " style="left:984px;top:570.4px;font-size:18.6px;color:#222;transform:scaleX(0.910);transform-origin:0 0;">Attach</div>
<div class="a " style="left:1121px;top:570.4px;font-size:18.6px;color:#222;transform:scaleX(0.847);transform-origin:0 0;">Print</div>
<div class="a " style="left:1235px;top:570.4px;font-size:18.6px;color:#222;transform:scaleX(0.858);transform-origin:0 0;">Save</div>
<div class="a " style="left:633px;top:615.6px;font-size:18.6px;color:#222;transform:scaleX(0.887);transform-origin:0 0;">To:</div>
<div class="a " style="left:618px;top:658px;font-size:18.6px;color:#222;transform:scaleX(0.762);transform-origin:0 0;">From:</div>
<div class="a " style="left:597px;top:699.4px;font-size:18.6px;color:#222;transform:scaleX(0.863);transform-origin:0 0;">Subject:</div>
<div class="a " style="left:587px;top:815.6px;font-size:18.6px;color:#222;transform:scaleX(0.843);transform-origin:0 0;">Message:</div>
<div class="a " style="left:672px;top:615.6px;font-size:18.2px;color:#aaa;transform:scaleX(0.900);transform-origin:0 0;">JONATHAN</div>
<div class="a " style="left:930.6px;top:615.6px;font-size:18.6px;color:#222;transform:scaleX(0.749);transform-origin:0 0;">CC:</div>
<div class="a " style="left:672px;top:658.6px;font-size:18.2px;color:#aaa;transform:scaleX(0.850);transform-origin:0 0;">SALLY</div>
<div class="a " style="left:917.2px;top:658px;font-size:18.6px;color:#222;transform:scaleX(0.819);transform-origin:0 0;">Date:</div>
<div class="a " style="left:966.6px;top:658px;font-size:18.6px;color:#222;">(</div>
<div class="a " style="left:672px;top:699.4px;font-size:18.6px;color:#111;transform:scaleX(0.861);transform-origin:0 0;">Lunch Order</div>
<div class="a " style="left:672px;top:816.6px;font-size:18.6px;color:#111;transform:scaleX(0.847);transform-origin:0 0;">Bill from Galaxo is coming in today at lunch. He is bringing in food from Stage Deli.</div>
<div class="a " style="left:672px;top:837.4px;font-size:18.6px;color:#111;transform:scaleX(0.886);transform-origin:0 0;">What do you want?</div>
<div class="a dis" style="left:1306.9px;top:775.2px;font-size:18.6px;color:#b0ad9e;transform:scaleX(0.913);transform-origin:0 0;"><u>R</u>efill Meds</div>
<div class="a dis" style="left:1315.5px;top:848px;font-size:18.6px;color:#b0ad9e;transform:scaleX(0.845);transform-origin:0 0;">P<u>u</u>ll Chart</div>
<div class="a dis" style="left:1298.4px;top:900.6px;font-size:18.6px;color:#b0ad9e;transform:scaleX(0.878);transform-origin:0 0;">S<u>a</u>ve To Chart</div>
<div class="a dis" style="left:1298px;top:956px;font-size:18.6px;color:#b0ad9e;transform:scaleX(0.838);transform-origin:0 0;">Sen<u>d</u> Message</div>
<div class="a " style="left:1565.98px;top:414.6px;font-size:24px;color:#e3e78e;font-weight:bold;">X</div>
<div class="a " style="left:1303.4px;top:448.4px;font-size:19px;color:#111;transform:scaleX(0.841);transform-origin:0 0;">Why am I still using a sticky note</div>
<div class="a " style="left:1303.4px;top:470px;font-size:19px;color:#111;transform:scaleX(0.852);transform-origin:0 0;">when I have messaging?</div>
<div class="a " style="left:1423.8px;top:601.2px;font-size:20.8px;color:#eaec9c;font-weight:bold;transform:scaleX(0.853);transform-origin:0 0;">PRINT</div>
<div class="a " style="left:1517px;top:601.2px;font-size:20.8px;color:#eaec9c;font-weight:bold;transform:scaleX(0.850);transform-origin:0 0;">SAVE</div>
</div>
</body></html>
